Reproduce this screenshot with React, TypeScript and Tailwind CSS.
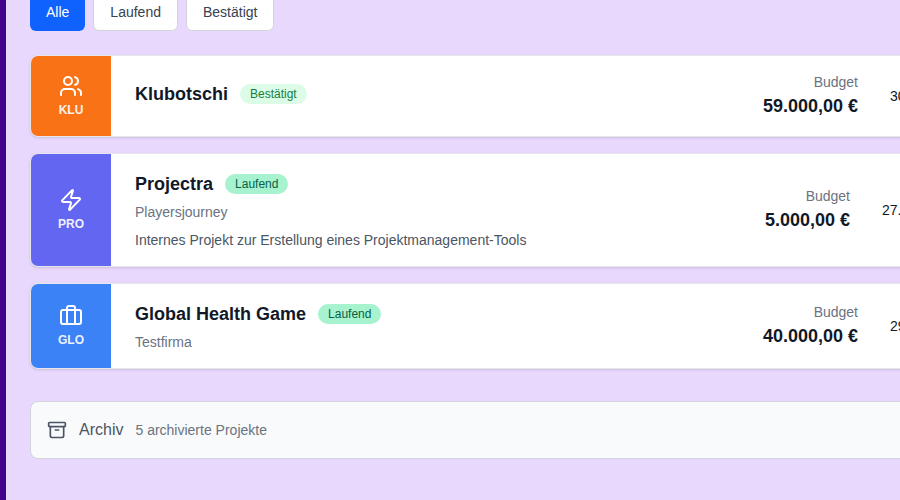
import { Archive, Briefcase, Users, Zap } from 'lucide-react';
import type { ReactNode } from 'react';

type Project = {
  code: string;
  name: string;
  status: string;
  statusClass: string;
  color: string;
  icon: ReactNode;
  company?: string;
  description?: string;
  budget: string;
  date: string;
  dateWidth: string;
};

const PROJECTS: Project[] = [
  {
    code: 'KLU',
    name: 'Klubotschi',
    status: 'Bestätigt',
    statusClass: 'bg-[#dcfce7] text-[#15803d]',
    color: 'bg-[#f97316]',
    icon: <Users size={24} strokeWidth={2} />,
    budget: '59.000,00 €',
    date: '30.06.2025',
    dateWidth: 'w-[100px]',
  },
  {
    code: 'PRO',
    name: 'Projectra',
    status: 'Laufend',
    statusClass: 'bg-[#a7f3d0] text-[#065f46]',
    color: 'bg-[#6366f1]',
    icon: <Zap size={24} strokeWidth={2} />,
    company: 'Playersjourney',
    description: 'Internes Projekt zur Erstellung eines Projektmanagement-Tools',
    budget: '5.000,00 €',
    date: '27.03.2025',
    dateWidth: 'w-[108px]',
  },
  {
    code: 'GLO',
    name: 'Global Health Game',
    status: 'Laufend',
    statusClass: 'bg-[#a7f3d0] text-[#065f46]',
    color: 'bg-[#3b82f6]',
    icon: <Briefcase size={24} strokeWidth={2} />,
    company: 'Testfirma',
    budget: '40.000,00 €',
    date: '29.09.2025',
    dateWidth: 'w-[100px]',
  },
];

function ProjectCard({ project }: { project: Project }) {
  return (
    <div className="flex w-[961px] overflow-hidden rounded-lg border border-[#e5e7eb] bg-white shadow-sm">
      <div className={`flex min-h-20 w-20 shrink-0 flex-col items-center justify-center gap-1 text-white ${project.color}`}>
        {project.icon}
        <span className="text-xs leading-4 font-bold opacity-90">{project.code}</span>
      </div>
      <div className="flex flex-1 items-center py-4 pl-6">
        <div className="flex-1">
          <div className="mb-1 flex items-center gap-3">
            <h3 className="text-lg leading-7 font-bold text-[#111827]">{project.name}</h3>
            <span className={`rounded-full px-2.5 py-0.5 text-xs leading-4 ${project.statusClass}`}>
              {project.status}
            </span>
          </div>
          {project.company && <p className="text-sm leading-5 text-[#6b7280]">{project.company}</p>}
          {project.description && <p className="mt-2 text-sm leading-5 text-[#4b5563]">{project.description}</p>}
        </div>
        <div className="text-right">
          <div className="text-sm leading-5 text-[#6b7280]">Budget</div>
          <div className="text-lg leading-7 font-bold text-[#111827]">{project.budget}</div>
        </div>
        <div className={`ml-8 text-sm text-[#111827] ${project.dateWidth}`}>{project.date}</div>
      </div>
    </div>
  );
}

export default function App() {
  return (
    <div className="flex h-[500px] w-[900px] overflow-hidden bg-[#e9d8fd] font-['Liberation_Sans',sans-serif]">
      <div className="w-1.5 shrink-0 bg-[#43008a]" />
      <main className="mt-[-7px] flex flex-col pl-6">
        <div className="flex gap-2">
          <button className="h-[38px] rounded-md bg-[#0f62fe] px-4 text-sm text-white">Alle</button>
          <button className="h-[38px] rounded-md border border-[#d1d5db] bg-white px-4 text-sm text-[#374151]">
            Laufend
          </button>
          <button className="h-[38px] rounded-md border border-[#d1d5db] bg-white px-4 text-sm text-[#374151]">
            Bestätigt
          </button>
        </div>
        <div className="mt-6 flex flex-col gap-4">
          {PROJECTS.map((p) => (
            <ProjectCard key={p.code} project={p} />
          ))}
        </div>
        <div className="mt-8 flex h-[58px] w-[961px] items-center gap-3 rounded-lg border border-[#d1d5db] bg-[#f9fafb] px-4">
          <Archive size={20} className="text-[#4b5563]" />
          <span className="text-base text-[#4b5563]">Archiv</span>
          <span className="text-sm text-[#6b7280]">5 archivierte Projekte</span>
        </div>
      </main>
    </div>
  );
}
